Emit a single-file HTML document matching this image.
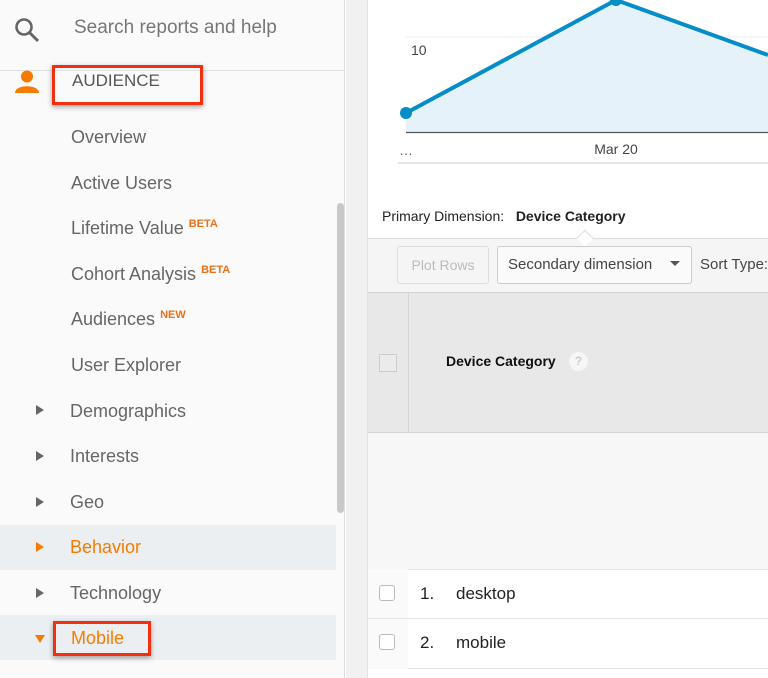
<!DOCTYPE html>
<html><head><style>
*{margin:0;padding:0;box-sizing:border-box}
body{width:768px;height:678px;overflow:hidden;position:relative;background:#fff;font-family:"Liberation Sans",Arial,sans-serif}
.a{position:absolute;white-space:nowrap}
.side{left:0;top:0;width:345px;height:678px;background:#fafafa;border-right:1px solid #ddd}
.it{position:absolute;left:71px;font-size:18px;color:#666;line-height:22px;white-space:nowrap}
.sup{font-size:11px;color:#e8711a;font-weight:bold;vertical-align:top;position:relative;top:-4px;margin-left:5px}
.tri{position:absolute;left:36px;width:0;height:0;border-top:5px solid transparent;border-bottom:5px solid transparent;border-left:8px solid #666}
.hl{position:absolute;left:0;width:336px;height:45px;background:#eceff1}
.red{position:absolute;border:3px solid #f2300f;box-shadow:0 2px 5px rgba(0,0,0,.35)}
.cb{position:absolute;width:16px;height:16px;border:1px solid #bbb;border-radius:3px;background:#fff}
</style></head><body>
<div class="a side"></div>
<svg class="a" style="left:13px;top:16px" width="28" height="28" viewBox="0 0 28 28"><circle cx="11" cy="11" r="7.5" fill="none" stroke="#666" stroke-width="2.6"/><line x1="16.5" y1="16.5" x2="25" y2="25" stroke="#666" stroke-width="3"/></svg>
<div class="it" style="left:74px;top:17px;color:#777;font-size:19px">Search reports and help</div>
<div class="a" style="left:0;top:70px;width:345px;height:1px;background:#e0e0e0"></div>
<svg class="a" style="left:14px;top:70px" width="26" height="24" viewBox="0 0 26 24"><circle cx="13" cy="6.5" r="6" fill="#f57c00"/><path d="M1 23 C1 14 25 14 25 23 Z" fill="#f57c00"/></svg>
<div class="it" style="left:72px;top:70px;font-size:17px;color:#555">AUDIENCE</div>
<div class="red" style="left:52px;top:65px;width:151px;height:40px"></div>
<div class="it" style="top:126px">Overview</div>
<div class="it" style="top:172px">Active Users</div>
<div class="it" style="top:217px">Lifetime Value<span class="sup">BETA</span></div>
<div class="it" style="top:263px">Cohort Analysis<span class="sup">BETA</span></div>
<div class="it" style="top:308px">Audiences<span class="sup">NEW</span></div>
<div class="it" style="top:354px">User Explorer</div>
<div class="tri" style="top:405px"></div><div class="it" style="left:70px;top:400px">Demographics</div>
<div class="tri" style="top:451px"></div><div class="it" style="left:70px;top:445px">Interests</div>
<div class="tri" style="top:497px"></div><div class="it" style="left:70px;top:491px">Geo</div>
<div class="hl" style="top:525px"></div>
<div class="tri" style="top:542px;border-left-color:#f57c00"></div><div class="it" style="left:70px;top:536px;color:#f57c00">Behavior</div>
<div class="tri" style="top:588px"></div><div class="it" style="left:70px;top:582px">Technology</div>
<div class="hl" style="top:615px"></div>
<div class="a" style="left:35px;top:635px;width:0;height:0;border-left:5px solid transparent;border-right:5px solid transparent;border-top:8px solid #f57c00"></div>
<div class="it" style="left:71px;top:627px;color:#f57c00">Mobile</div>
<div class="red" style="left:53px;top:621px;width:98px;height:35px"></div>
<div class="a" style="left:337px;top:203px;width:7px;height:310px;background:#c8c8c8;border-radius:4px"></div>
<div class="a" style="left:346px;top:0;width:22px;height:678px;background:#f1f1f1;border-right:1px solid #e2e2e2"></div>
<svg class="a" style="left:368px;top:0" width="400" height="170">
<line x1="38" y1="37" x2="400" y2="37" stroke="#eee"/>
<polygon points="38,113 248,0 400,55 400,132 38,132" fill="#e6f2fa"/>
<polyline points="38,113 248,0 400,55" fill="none" stroke="#058dc7" stroke-width="4"/>
<circle cx="38" cy="113" r="6" fill="#058dc7"/><circle cx="248" cy="0" r="6" fill="#058dc7"/>
<line x1="38" y1="132.5" x2="400" y2="132.5" stroke="#555" stroke-width="1.2"/>
<line x1="30" y1="163" x2="400" y2="163" stroke="#ddd" stroke-width="1.5"/>
<text x="43" y="55" font-size="14" fill="#444" font-family="Liberation Sans">10</text>
<text x="31" y="155" font-size="14" fill="#666" font-family="Liberation Sans">…</text>
<text x="248" y="154" font-size="14" fill="#444" text-anchor="middle" font-family="Liberation Sans">Mar 20</text>
</svg>
<div class="a" style="left:382px;top:208px;font-size:14px;color:#222">Primary Dimension:&nbsp;&nbsp; <b style="color:#222">Device Category</b></div>
<div class="a" style="left:368px;top:238px;width:400px;height:54px;background:#f5f5f5;border-top:1px solid #ddd"></div>
<div class="a" style="left:579px;top:232px;width:12px;height:12px;background:#fff;border-left:1px solid #ddd;border-top:1px solid #ddd;transform:rotate(45deg)"></div>
<div class="a" style="left:397px;top:246px;width:92px;height:38px;border:1px solid #ddd;border-radius:3px;font-size:14px;color:#bbb;text-align:center;line-height:36px">Plot Rows</div>
<div class="a" style="left:497px;top:246px;width:195px;height:38px;border:1px solid #ccc;border-radius:3px;background:#fafafa;font-size:15px;color:#444;line-height:36px;padding-left:10px">Secondary dimension</div>
<div class="a" style="left:670px;top:261px;width:0;height:0;border-left:5px solid transparent;border-right:5px solid transparent;border-top:5px solid #555"></div>
<div class="a" style="left:700px;top:256px;font-size:15px;color:#444">Sort Type:</div>
<div class="a" style="left:368px;top:292px;width:400px;height:141px;background:#e8e8e8;border-top:1px solid #d5d5d5;border-bottom:1px solid #d5d5d5"></div>
<div class="a" style="left:408px;top:292px;width:1px;height:376px;background:#d5d5d5"></div>
<div class="a" style="left:379px;top:354px;width:18px;height:18px;border:1px solid #ccc;background:#ebebeb"></div>
<div class="a" style="left:446px;top:353px;font-size:14px;font-weight:bold;color:#111">Device Category</div>
<div class="a" style="left:569px;top:352px;width:19px;height:19px;border-radius:50%;background:#f6f6f6;color:#ccc;font-size:12px;text-align:center;line-height:19px;font-weight:bold">?</div>
<div class="a" style="left:368px;top:433px;width:400px;height:136px;background:#f7f7f7"></div>
<div class="a" style="left:368px;top:569px;width:400px;height:100px;background:#fff;border-top:1px solid #e5e5e5;border-bottom:1px solid #e5e5e5"></div>
<div class="a" style="left:368px;top:569px;width:40px;height:100px;background:#fafafa"></div>
<div class="a" style="left:368px;top:618px;width:400px;height:1px;background:#e5e5e5"></div>
<div class="cb" style="left:379px;top:585px"></div>
<div class="cb" style="left:379px;top:634px"></div>
<div class="a" style="left:420px;top:584px;font-size:17px;color:#222">1.</div>
<div class="a" style="left:456px;top:584px;font-size:17px;color:#222">desktop</div>
<div class="a" style="left:420px;top:633px;font-size:17px;color:#222">2.</div>
<div class="a" style="left:456px;top:633px;font-size:17px;color:#222">mobile</div>
</body></html>
